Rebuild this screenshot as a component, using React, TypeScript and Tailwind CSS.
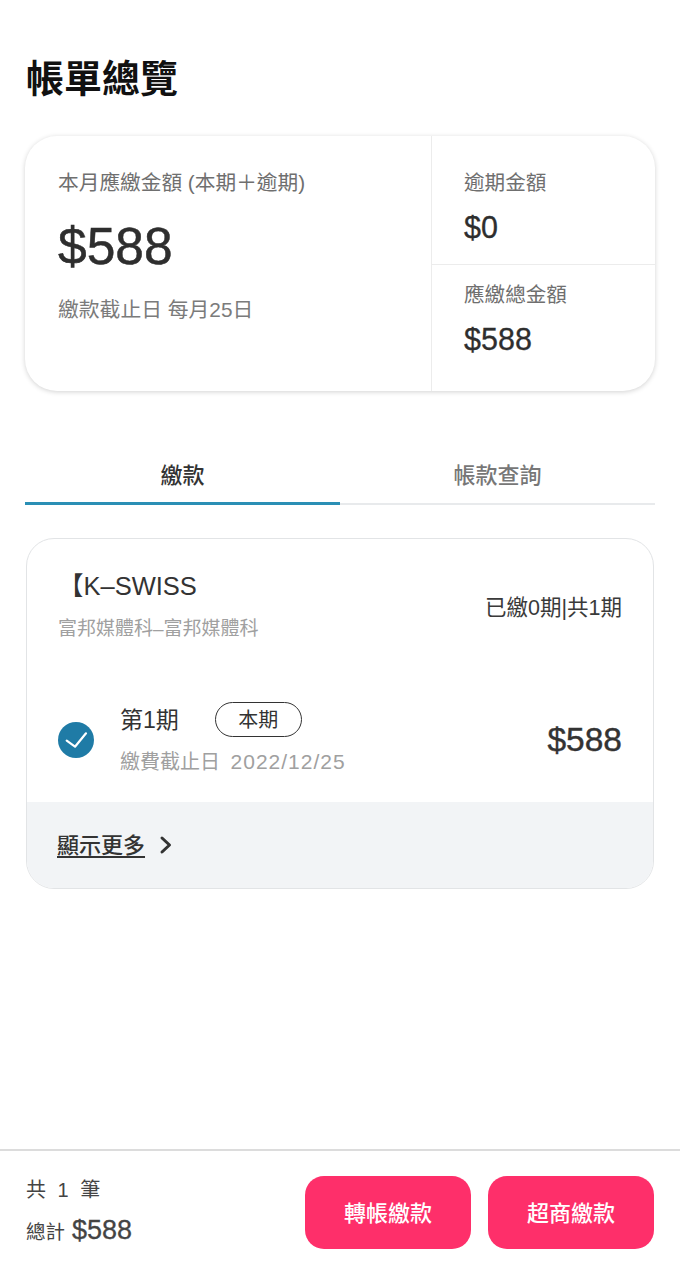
import React from 'react';

const FONT = "font-['Liberation_Sans','Noto_Sans_CJK_TC',sans-serif]";

const SideStat: React.FC<{ label: string; value: string; className?: string }> = ({ label, value, className }) => (
  <div className={`pl-[32px] ${className ?? ''}`}>
    <div className="text-[20.6px] leading-[30px] text-[#6f6f6f]">{label}</div>
    <div className="mt-[12px] text-[30.5px] leading-[34px] text-[#2e2e2e] [-webkit-text-stroke:0.3px_#2e2e2e]">{value}</div>
  </div>
);

const PayButton: React.FC<{ label: string }> = ({ label }) => (
  <button className="w-[166px] h-[73px] rounded-[19px] bg-[#fe2f6a] text-white text-[22px] font-medium pt-[2px]">{label}</button>
);

export default function App() {
  return (
    <div className={`${FONT} relative w-[680px] h-[1279px] bg-white flex flex-col overflow-hidden`}>
      <h1 className="ml-[26px] mt-[55px] text-[38px] leading-[48px] font-bold text-[#111111]">帳單總覽</h1>

      {/* overview card */}
      <section className="mx-[25px] mt-[33px] h-[255px] rounded-[32px] bg-white shadow-[0_1px_5px_rgba(0,0,0,0.18)] flex">
        <div className="w-[407px] pl-[33px] pt-[32px] border-r border-[#ececec]">
          <div className="text-[20.7px] leading-[30px] text-[#6f6f6f]">本月應繳金額 (本期＋逾期)</div>
          <div className="mt-[19px] text-[51.5px] leading-[58px] text-[#2e2e2e] [-webkit-text-stroke:0.5px_#2e2e2e]">$588</div>
          <div className="mt-[20px] text-[20.8px] leading-[30px] text-[#7b7b7b]">繳款截止日 每月25日</div>
        </div>
        <div className="flex-1 flex flex-col">
          <SideStat label="逾期金額" value="$0" className="h-[129px] pt-[32px] border-b border-[#ececec]" />
          <SideStat label="應繳總金額" value="$588" className="flex-1 pt-[15px]" />
        </div>
      </section>

      {/* tabs */}
      <nav className="mx-[25px] mt-[59px] h-[55px] flex border-b-2 border-[#e8eaec]">
        <div className="w-[315px] -mb-[2px] border-b-[3px] border-[#2a8fb5] text-center text-[22px] leading-[52px] font-medium text-[#333333]">繳款</div>
        <div className="flex-1 text-center text-[22px] leading-[52px] font-medium text-[#777777]">帳款查詢</div>
      </nav>

      {/* bill card */}
      <section className="mx-[26px] mt-[33px] h-[351px] rounded-[28px] border border-[#e2e4e6] overflow-hidden flex flex-col">
        <div className="flex-1 pl-[31px] pr-[31px]">
          <div className="flex items-center justify-between pt-[30px]">
            <div>
              <div className="text-[25.5px] leading-[34px] text-[#333333]">【K–SWISS</div>
              <div className="mt-[12px] text-[19px] leading-[28px] text-[#a0a0a0]">富邦媒體科–富邦媒體科</div>
            </div>
            <div className="pt-[4px] text-[21.5px] leading-[30px] text-[#3a3a3a]">已繳0期|共1期</div>
          </div>
          <div className="mt-[59px] flex items-center">
            <div className="w-[36px] h-[36px] rounded-full bg-[#1f7ba6]">
              <svg width="36" height="36" viewBox="0 0 36 36" fill="none" stroke="white" strokeWidth="2.2" strokeLinecap="round" strokeLinejoin="round">
                <path d="M8.7 18.7L17 24.7L28 11.3" />
              </svg>
            </div>
            <div className="ml-[26px] flex-1">
              <div className="flex items-center">
                <span className="text-[23px] leading-[34px] text-[#333333]">第1期</span>
                <span className="ml-[36px] w-[87px] h-[35px] rounded-full border-[1.5px] border-[#333333] flex items-center justify-center text-[20px] text-[#333333]">本期</span>
              </div>
              <div className="mt-[9px] text-[20px] leading-[32px] text-[#a0a0a0]">繳費截止日 <span className="ml-[5px] text-[21px] tracking-[1px]">2022/12/25</span></div>
            </div>
            <div className="text-[33.5px] leading-[40px] text-[#333333] [-webkit-text-stroke:0.4px_#333333]">$588</div>
          </div>
        </div>
        <div className="h-[86px] bg-[#f2f4f6] pl-[30px] flex items-center">
          <span className="pt-[2px] text-[22px] leading-[30px] font-medium text-[#333333] underline underline-offset-[3px]">顯示更多</span>
          <svg className="ml-[13px]" width="16" height="20" viewBox="0 0 16 20" fill="none" stroke="#333333" strokeWidth="3" strokeLinecap="round" strokeLinejoin="round">
            <path d="M4 3l7.5 7L4 17" />
          </svg>
        </div>
      </section>

      {/* bottom bar */}
      <footer className="mt-auto h-[130px] border-t-2 border-[#dcdcdc] flex justify-between pl-[26px] pr-[26px] pt-[25px]">
        <div>
          <div className="text-[20px] leading-[28px] tracking-[3px] text-[#444444]">共 1 筆</div>
          <div className="mt-[9px] flex items-baseline text-[#444444]">
            <span className="text-[19.5px] leading-[34px]">總計</span>
            <span className="ml-[7px] text-[27px] leading-[34px] [-webkit-text-stroke:0.3px_#444444]">$588</span>
          </div>
        </div>
        <div className="flex gap-[17px]">
          <PayButton label="轉帳繳款" />
          <PayButton label="超商繳款" />
        </div>
      </footer>
    </div>
  );
}
